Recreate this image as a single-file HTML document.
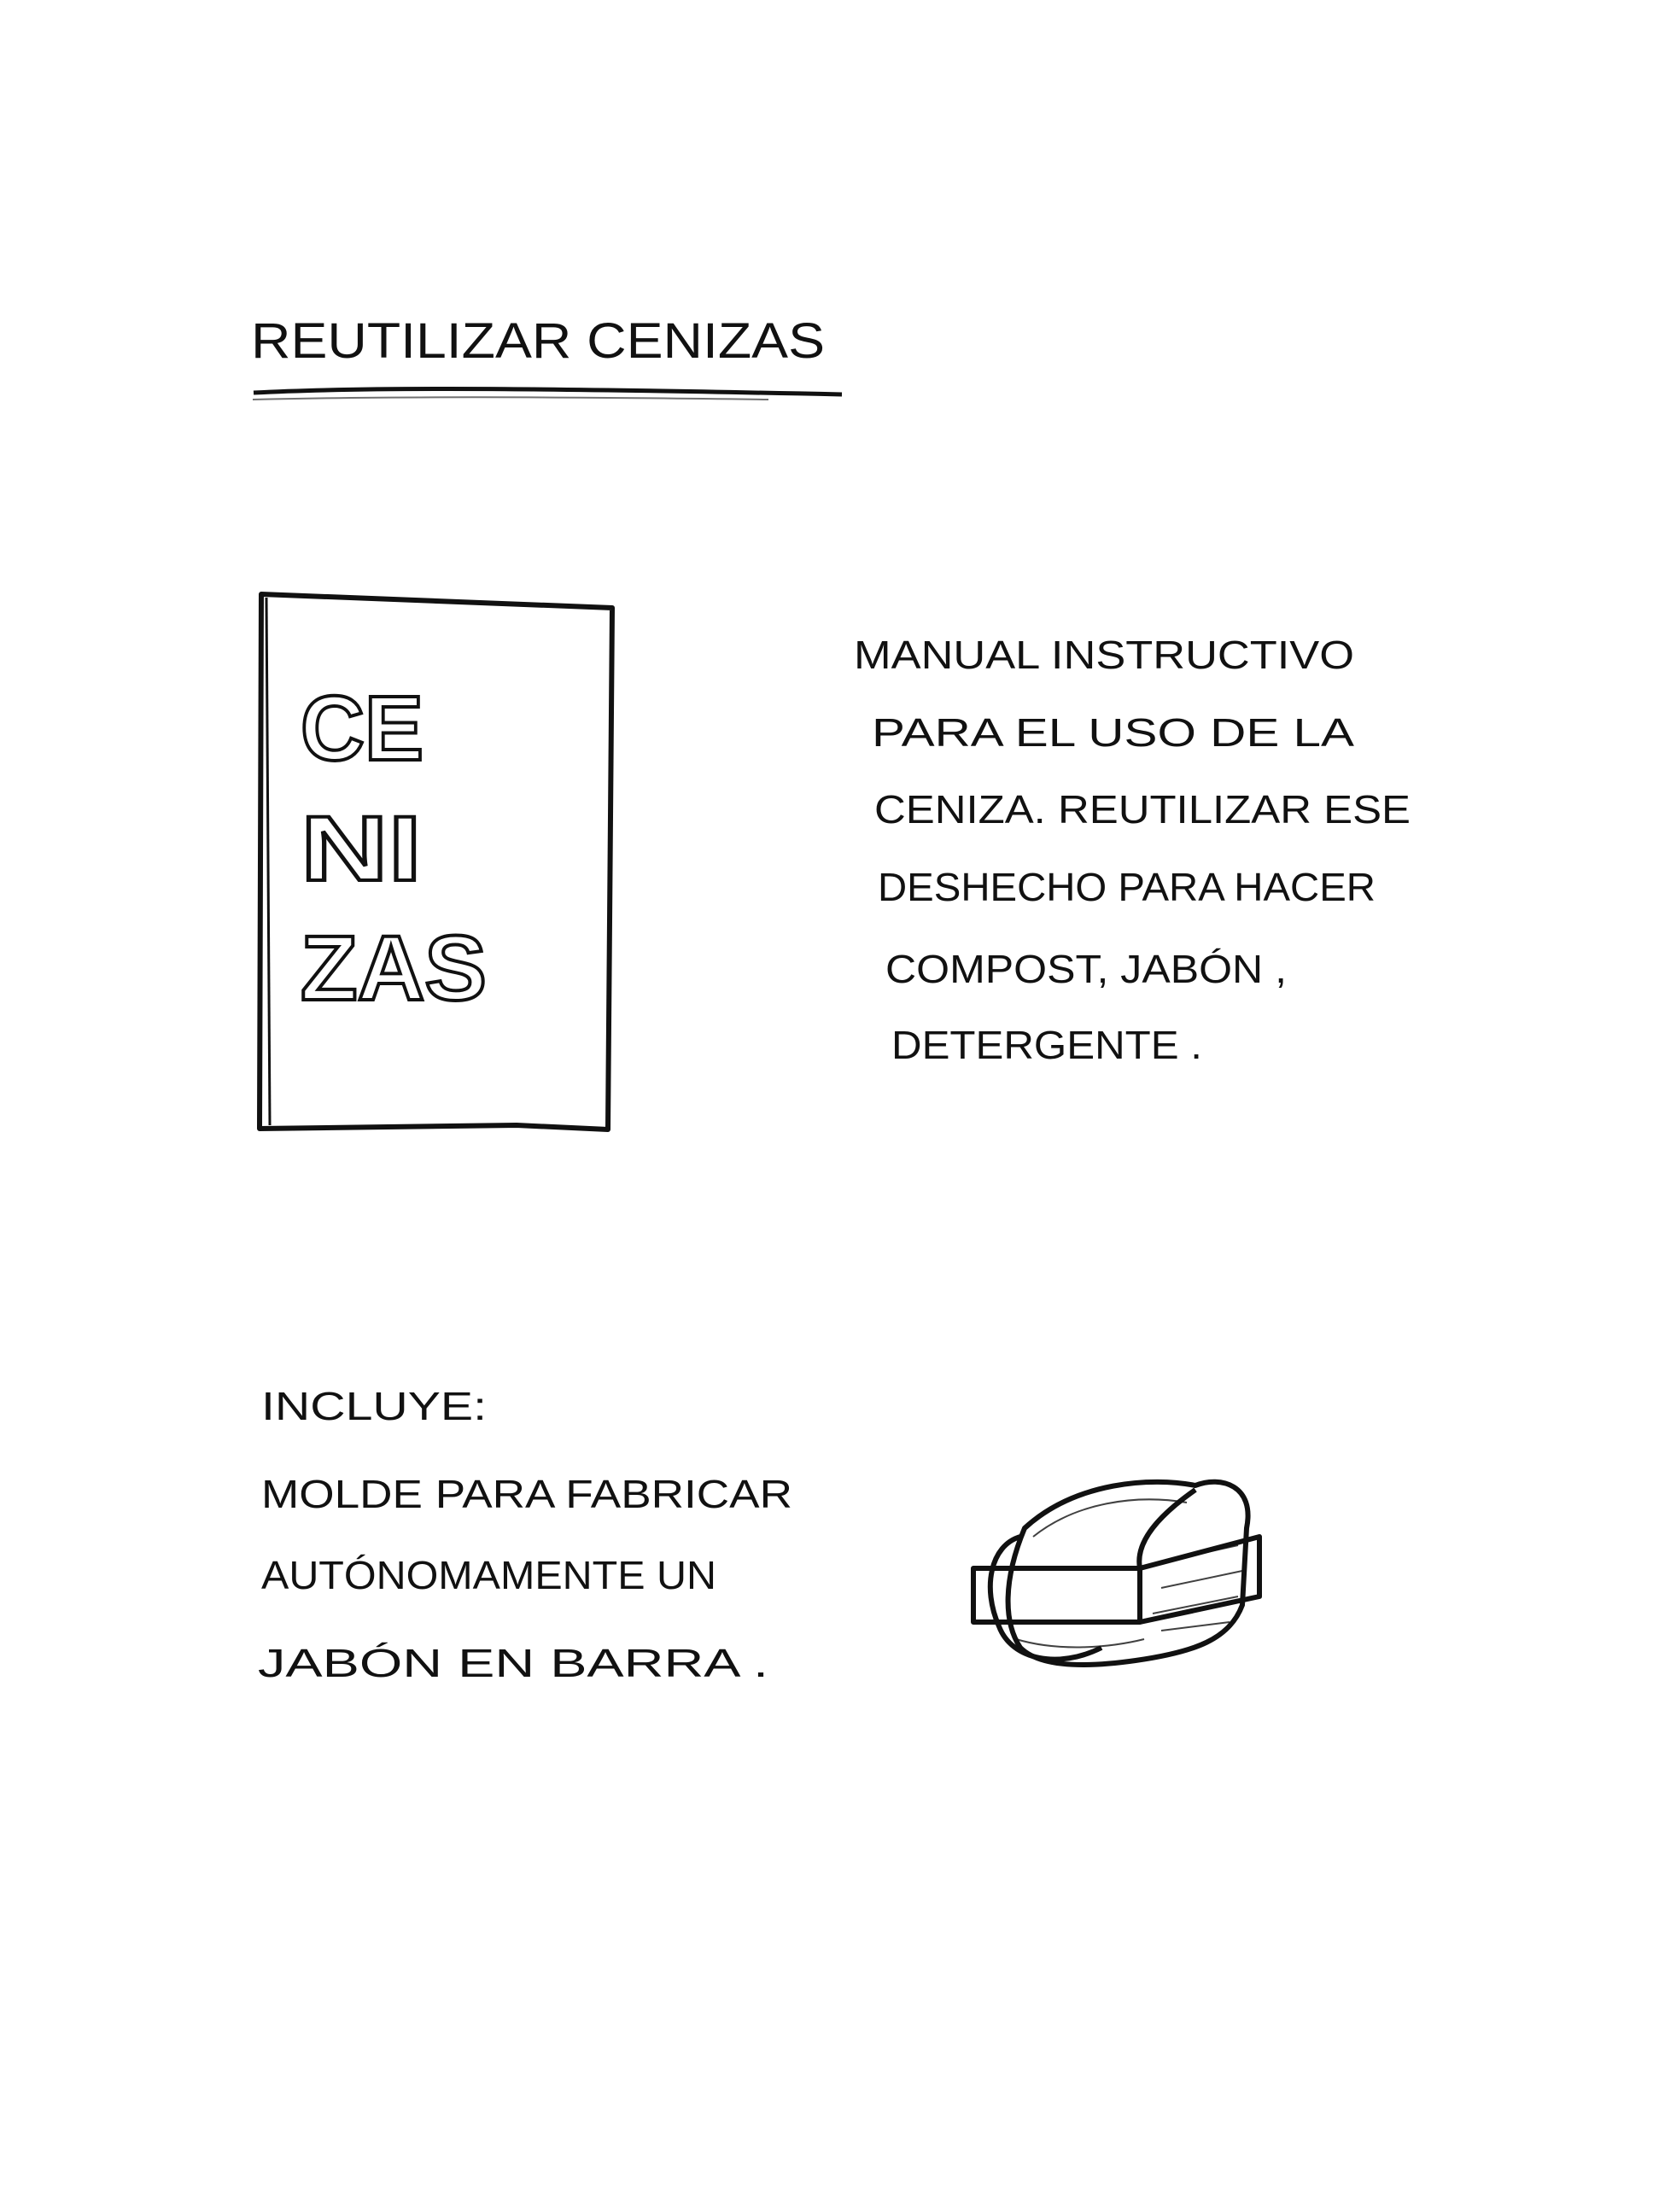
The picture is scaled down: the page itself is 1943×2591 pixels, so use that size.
<!DOCTYPE html>
<html><head><meta charset="utf-8"><style>
html,body{margin:0;padding:0;background:#fff;}
svg{display:block;}
text{font-family:"Liberation Sans",sans-serif;}
</style></head><body>
<svg width="1943" height="2591" viewBox="0 0 1943 2591" xmlns="http://www.w3.org/2000/svg">
<rect width="1943" height="2591" fill="#fff"/>
<g fill="#111" font-size="58">
<text x="294" y="419" textLength="672" lengthAdjust="spacingAndGlyphs">REUTILIZAR CENIZAS</text>
</g>
<path d="M297 460 C450 452 700 456 986 462" stroke="#111" stroke-width="5" fill="none"/>
<path d="M296 468 C500 463 750 466 900 468" stroke="#111" stroke-width="2" fill="none" opacity=".6"/>
<path d="M306 696 L717 712 L712 1323 L605 1318 L304 1322 Z" stroke="#111" stroke-width="6" fill="none" stroke-linejoin="round"/>
<path d="M312 700 L316 1318" stroke="#111" stroke-width="3" fill="none"/>
<g fill="#fff" stroke="#111" stroke-width="4" font-size="108" font-weight="bold">
<text x="352" y="890" textLength="144" lengthAdjust="spacingAndGlyphs">CE</text>
<text x="352" y="1031" textLength="142" lengthAdjust="spacingAndGlyphs">NI</text>
<text x="352" y="1171" textLength="218" lengthAdjust="spacingAndGlyphs">ZAS</text>
</g>
<g fill="#111" font-size="46">
<text x="1000" y="783" textLength="586" lengthAdjust="spacingAndGlyphs">MANUAL INSTRUCTIVO</text>
<text x="1021" y="874" textLength="565" lengthAdjust="spacingAndGlyphs">PARA EL USO DE LA</text>
<text x="1024" y="964" textLength="628" lengthAdjust="spacingAndGlyphs">CENIZA. REUTILIZAR ESE</text>
<text x="1028" y="1055" textLength="583" lengthAdjust="spacingAndGlyphs">DESHECHO PARA HACER</text>
<text x="1037" y="1151" textLength="470" lengthAdjust="spacingAndGlyphs">COMPOST, JABÓN ,</text>
<text x="1044" y="1240" textLength="364" lengthAdjust="spacingAndGlyphs">DETERGENTE .</text>
<text x="306" y="1663" textLength="264" lengthAdjust="spacingAndGlyphs">INCLUYE:</text>
<text x="306" y="1766" textLength="622" lengthAdjust="spacingAndGlyphs">MOLDE PARA FABRICAR</text>
<text x="306" y="1861" textLength="533" lengthAdjust="spacingAndGlyphs">AUTÓNOMAMENTE UN</text>
<text x="302" y="1964" textLength="598" lengthAdjust="spacingAndGlyphs">JABÓN EN BARRA .</text>
</g>
<g stroke="#111" stroke-width="6" fill="none" stroke-linejoin="round">
<path d="M1200 1790 C1260 1735 1350 1730 1400 1740 C1430 1728 1470 1740 1460 1790 L1455 1880 C1440 1920 1400 1935 1330 1945 C1260 1955 1215 1950 1195 1930 C1175 1900 1175 1850 1200 1790 Z"/>
<path d="M1195 1800 C1160 1810 1150 1860 1170 1905 C1185 1945 1240 1955 1290 1930"/>
<path d="M1140 1837 L1335 1837 L1335 1900 L1140 1900 Z"/>
<path d="M1335 1837 L1475 1800 L1475 1870 L1335 1900"/>
<path d="M1400 1745 C1350 1780 1330 1810 1335 1837"/>
</g>
<g stroke="#111" stroke-width="2" fill="none" opacity=".8">
<path d="M1210 1800 C1260 1760 1330 1750 1390 1760"/>
<path d="M1360 1830 L1450 1810 M1360 1860 L1455 1840 M1350 1890 L1450 1870 M1360 1910 L1440 1900"/>
<path d="M1190 1920 C1240 1935 1300 1930 1340 1920"/>
</g>
</svg>
</body></html>
